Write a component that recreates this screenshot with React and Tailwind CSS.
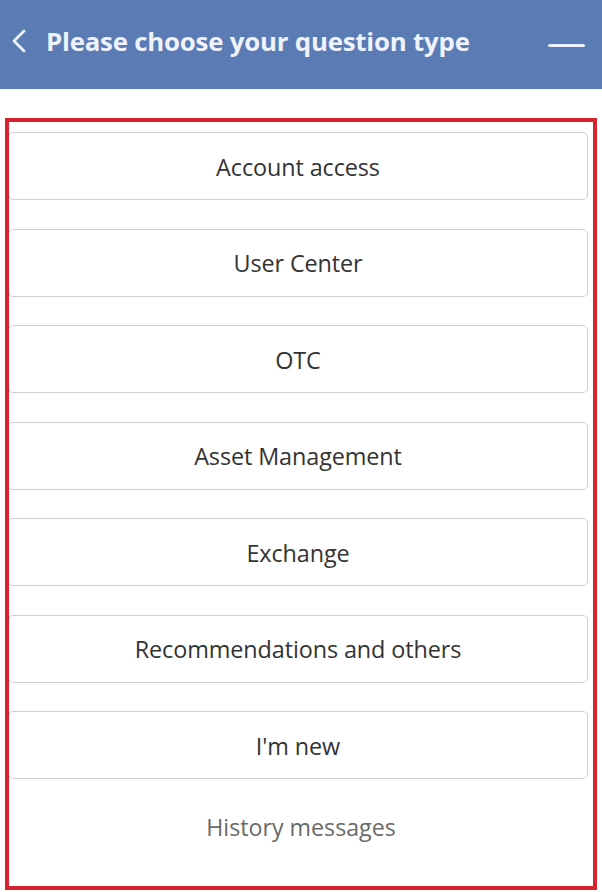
export default function App() {
  const items = [
    "Account access",
    "User Center",
    "OTC",
    "Asset Management",
    "Exchange",
    "Recommendations and others",
    "I'm new",
  ];
  return (
    <div className="w-[602px] h-[892px] bg-white overflow-hidden" style={{ fontFamily: '"Open Sans", "Noto Sans", sans-serif' }}>
      <div className="h-[89px] bg-[#5b7bb5] flex items-center relative">
        <svg className="absolute left-[11px] top-[29px]" width="16" height="24" viewBox="0 0 16 24" fill="none">
          <path d="M13 2 L3 12 L13 22" stroke="#eef2fa" strokeWidth="2.8" strokeLinecap="round" strokeLinejoin="round" />
        </svg>
        <div className="ml-[46px] -mt-[6px] text-[25.8px] font-bold text-[#eef2fa] tracking-[-0.2px]">
          Please choose your question type
        </div>
        <div className="absolute left-[548px] top-[44px] w-[37px] h-[3px] bg-[#eef2fa] rounded-sm" />
      </div>
      <div className="mt-[29px] mx-[5px] h-[772px] border-[4px] border-[#d9222d] overflow-hidden">
        <div className="pt-[10px]">
          {items.map((t) => (
            <div
              key={t}
              className="-ml-[1px] w-[580px] h-[68px] mb-[28.5px] pt-[3px] border border-[#cfcfcf] rounded-[5px] flex items-center justify-center text-[23.4px] tracking-[-0.1px] text-[#333333]"
            >
              {t}
            </div>
          ))}
          <div className="pt-[4px] text-center text-[23.2px] text-[#6a6a6a] leading-[30px]">History messages</div>
        </div>
      </div>
    </div>
  );
}
